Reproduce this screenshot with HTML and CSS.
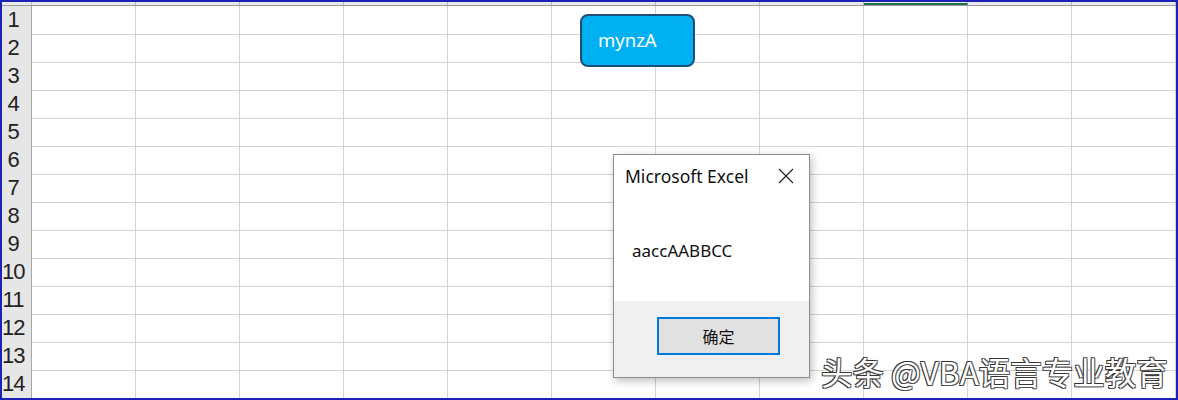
FILE: index.html
```html
<!DOCTYPE html>
<html lang="zh-CN">
<head>
    <meta charset="UTF-8">
    <title>Excel</title>
    <link rel="stylesheet" href="styles.css">
</head>
<body>
    <div class="frame">
        <div class="col-heads">
            <div class="corner"></div>
            <div class="ch"></div><div class="ch"></div><div class="ch"></div><div class="ch"></div>
            <div class="ch"></div><div class="ch"></div><div class="ch"></div><div class="ch"></div>
            <div class="ch selected"></div><div class="ch"></div><div class="ch"></div>
        </div>
        <div class="rows" id="rows"></div>

        <div class="shape-btn">mynzA</div>

        <div class="msgbox">
            <div class="msg-title">
                <span>Microsoft Excel</span>
                <svg class="close" width="16" height="16" viewBox="0 0 16 16">
                    <path d="M1 1 L15 15 M15 1 L1 15" stroke="#222" stroke-width="1.2" fill="none"/>
                </svg>
            </div>
            <div class="msg-body">aaccAABBCC</div>
            <div class="msg-foot">
                <button class="ok">确定</button>
            </div>
        </div>

        <div class="watermark">头条 @VBA语言专业教育</div>
    </div>

    <script>
        // 画表格行
        const rows = document.getElementById('rows');
        for (let i = 1; i <= 14; i++) {
            const row = document.createElement('div');
            row.className = 'row';
            let html = '<div class="rh">' + i + '</div>';
            for (let c = 0; c < 11; c++) {
                html += '<div class="cell"></div>';
            }
            row.innerHTML = html;
            rows.appendChild(row);
        }
    </script>
</body>
</html>
```

FILE: styles.css
```css
* {
    margin: 0;
    padding: 0;
    box-sizing: border-box;
}

body {
    background: #fff;
    font-family: 'Noto Sans', 'Noto Sans CJK SC', sans-serif;
}

.frame {
    position: relative;
    width: 1178px;
    height: 400px;
    border: 2px solid #1c22b8;
    overflow: hidden;
}

.col-heads {
    display: grid;
    grid-template-columns: 30px repeat(11, 104px);
    height: 4px;
    background: #e9eaf0;
    border-bottom: 1px solid #9a9aa6;
}

.col-heads .corner,
.col-heads .ch {
    border-right: 1px solid #b8b8c4;
}

.col-heads .ch.selected {
    border-bottom: 2px solid #217346;
}

.row {
    display: grid;
    grid-template-columns: 30px repeat(11, 104px);
    height: 28px;
}

.rh {
    background: #e6e6e6;
    border-right: 1px solid #a6a6a6;
    border-bottom: 1px solid #d0d0d0;
    font-family: 'Liberation Sans', Arial, sans-serif;
    font-size: 22px;
    line-height: 28px;
    color: #222;
    text-align: center;
    padding-right: 7px;
    letter-spacing: -1px;
    white-space: nowrap;
    overflow: visible;
}

.cell {
    border-right: 1px solid #d4d4d4;
    border-bottom: 1px solid #d4d4d4;
}

.shape-btn {
    position: absolute;
    left: 578px;
    top: 12px;
    width: 115px;
    height: 53px;
    background: #00b0f0;
    border: 2px solid #1f4e79;
    border-radius: 8px;
    color: #fff;
    font-size: 18.5px;
    line-height: 47px;
    padding-left: 16px;
}

.msgbox {
    position: absolute;
    left: 611px;
    top: 152px;
    width: 197px;
    height: 224px;
    background: #fff;
    border: 1px solid #8c8c8c;
    box-shadow: 2px 3px 8px rgba(0, 0, 0, 0.25);
    display: flex;
    flex-direction: column;
}

.msg-title {
    display: flex;
    justify-content: space-between;
    align-items: center;
    height: 42px;
    padding: 0 15px 0 11px;
    font-size: 17.5px;
    color: #111;
}

.msg-body {
    flex: 1;
    padding: 42px 0 0 18px;
    font-size: 17px;
    color: #111;
}

.msg-foot {
    height: 76px;
    background: #f0f0f0;
    display: flex;
    justify-content: center;
    padding-top: 16px;
}

.ok {
    width: 123px;
    height: 38px;
    background: #e1e1e1;
    border: 2px solid #0078d7;
    font-family: 'Noto Sans CJK SC', sans-serif;
    font-size: 16px;
    color: #111;
    margin-left: 14px;
}

.watermark {
    position: absolute;
    left: 819px;
    top: 346px;
    font-family: 'Noto Sans CJK SC', sans-serif;
    font-size: 31.5px;
    color: #fff;
    white-space: nowrap;
    text-shadow: -1px -1px 0 #333, 1px 1px 0 #555, -1px 1px 0 #333, 1px -1px 0 #555;
}
```
